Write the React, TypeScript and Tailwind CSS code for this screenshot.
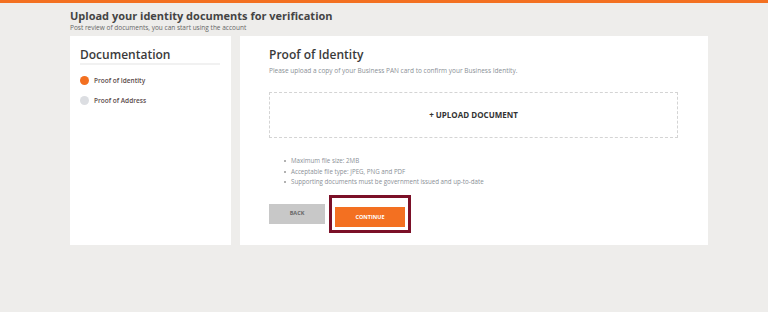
import { FC } from 'react'

const steps = [
    { name: 'Proof of Identity', active: true },
    { name: 'Proof of Address', active: false },
]

const notes = [
    'Maximum file size: 2MB',
    'Acceptable file type: JPEG, PNG and PDF',
    'Supporting documents must be government issued and up-to-date',
]

const App: FC = () => {
    return (
        <div className="w-[768px] h-[312px] bg-[#eeedeb] font-['Open_Sans',sans-serif] text-[#3a3a3a] overflow-hidden">
            <div className="h-[3px] bg-[#f37021]"></div>
            <div className="pl-[70px] pr-[60px] pt-[6px]">
                <h1 className="text-[11px] font-bold leading-[14px] text-[#444]">Upload your identity documents for verification</h1>
                <p className="text-[6.5px] leading-[9px] text-[#666]">Post review of documents, you can start using the account</p>
                <div className="flex gap-[9px] mt-[4px]">
                    <div className="w-[161px] h-[209px] bg-white px-[10px] pt-[11px]">
                        <p className="text-[12px] font-semibold leading-[16px] text-[#3a3a3a]">Documentation</p>
                        <div className="h-[2px] bg-[#f1f1f1] mr-[1px]"></div>
                        <div className="mt-[11px] flex flex-col gap-[10px]">
                            {steps.map(item => (
                                <div key={item.name} className="flex items-center gap-[5px]">
                                    <span className={item.active ? 'w-[9px] h-[9px] rounded-full bg-[#f37021]' : 'w-[9px] h-[9px] rounded-full bg-[#dcdee2]'}></span>
                                    <span className="text-[6.5px] font-semibold text-[#5a4a4a]">{item.name}</span>
                                </div>
                            ))}
                        </div>
                    </div>
                    <div className="w-[468px] h-[209px] bg-white pl-[29px] pr-[30px] pt-[11px]">
                        <p className="text-[12px] font-semibold leading-[16px] text-[#3a3a3a]">Proof of Identity</p>
                        <p className="text-[6.5px] leading-[10px] text-[#8a8f96] mt-[3px]">Please upload a copy of your Business PAN card to confirm your Business Identity.</p>
                        <div className="mt-[16px] h-[46px] border border-dashed border-[#d4d4d4] flex items-center justify-center">
                            <span className="text-[8px] font-bold text-[#333]">+ UPLOAD DOCUMENT</span>
                        </div>
                        <ul className="mt-[18px] pl-[15px] text-[6.2px] leading-[10.5px] text-[#8a8f96]">
                            {notes.map(n => (
                                <li key={n} className="flex items-center gap-[5px]">
                                    <span className="w-[2px] h-[2px] rounded-full bg-[#999]"></span>
                                    {n}
                                </li>
                            ))}
                        </ul>
                        <div className="flex items-center mt-[7px]">
                            <button className="w-[56px] h-[20px] bg-[#c8c8c8] text-[5.5px] font-bold text-[#666]">BACK</button>
                            <div className="ml-[4px] border-[3px] border-[#7b1028] p-[3px]">
                                <button className="w-[70px] h-[20px] bg-[#f37021] text-[5.5px] font-bold text-white">CONTINUE</button>
                            </div>
                        </div>
                    </div>
                </div>
            </div>
        </div>
    )
}

export default App
